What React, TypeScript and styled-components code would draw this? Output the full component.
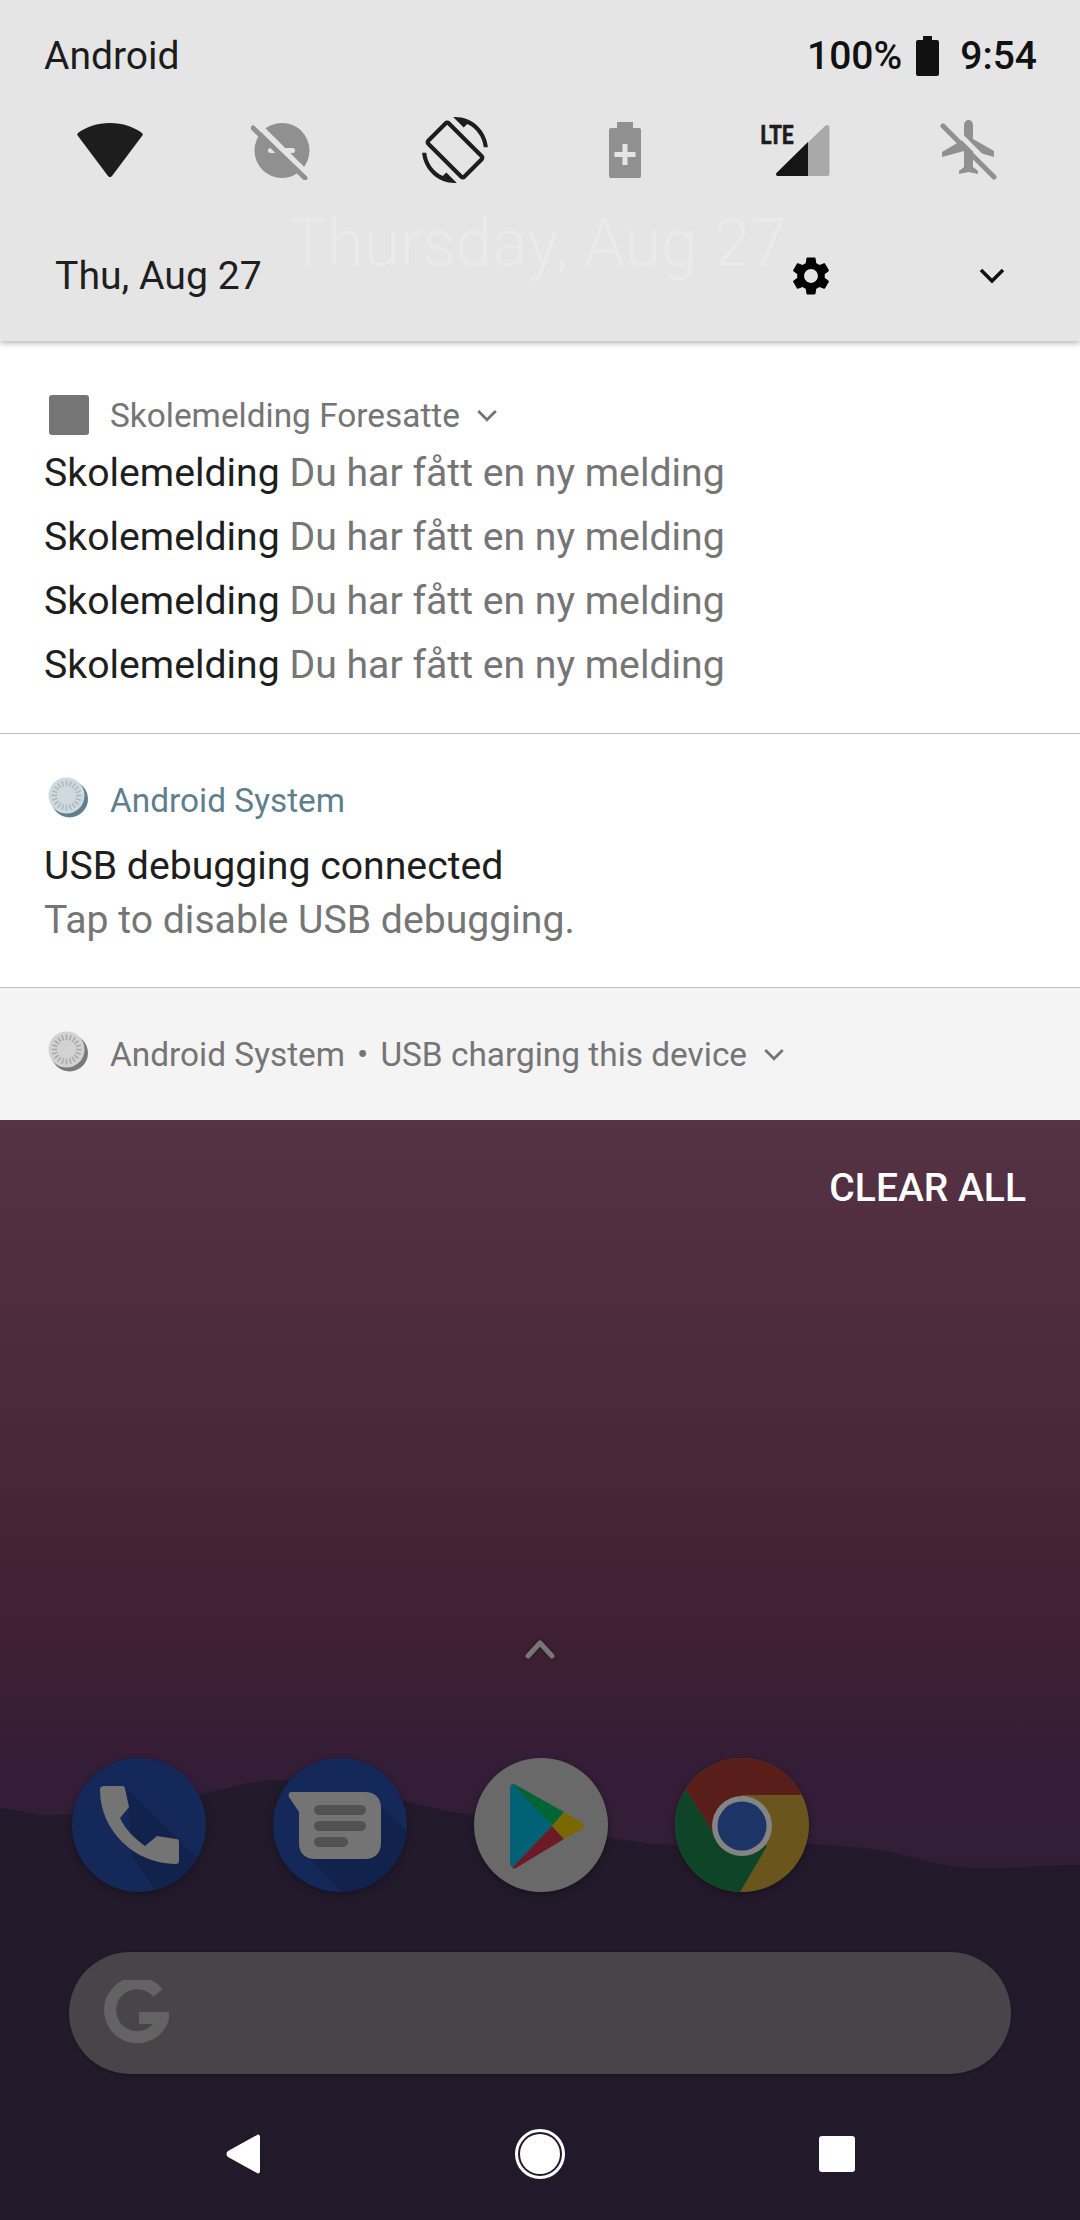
import React from "react";
import styled, { createGlobalStyle } from "styled-components";

const Global = createGlobalStyle`
  html, body { margin: 0; padding: 0; background: #211b28; }
  * { box-sizing: border-box; }
  #root { width: 1080px; height: 2220px; overflow: hidden; }
`;

const Screen = styled.div`
  width: 1080px;
  height: 2220px;
  display: flex;
  flex-direction: column;
  font-family: Roboto, "Noto Sans", sans-serif;
  -webkit-font-smoothing: antialiased;
`;

const Shade = styled.header`
  position: relative;
  z-index: 2;
  height: 341px;
  flex: none;
  background: #e6e5e6;
  box-shadow: 0 2px 6px rgba(0, 0, 0, 0.3);
  padding: 31px 44px 0;
  display: flex;
  flex-direction: column;
`;

const StatusBar = styled.div`
  height: 50px;
  display: flex;
  align-items: center;
  justify-content: space-between;
  font-size: 39px;
  color: #1c1c1c;
`;

const StatusRight = styled.div`
  display: flex;
  align-items: center;
  margin-right: -1px;
  color: #111;
  font-size: 39px;
  font-weight: 500;
`;

const StatusBattery = styled.svg`
  margin-left: 14px;
`;

const Clock = styled.span`
  margin-left: 21px;
`;

const Tiles = styled.div`
  margin-top: 34px;
  height: 70px;
  display: flex;
  align-items: center;
`;

const Tile = styled.div<{ $w: number }>`
  width: ${(p) => p.$w}px;
  flex: none;
  display: flex;
  justify-content: center;
`;

const LteLabel = styled.text`
  font-family: Roboto, sans-serif;
  font-size: 25px;
  font-weight: 700;
  fill: #1d1d1d;
  stroke: #1d1d1d;
  stroke-width: 0.7px;
`;

const DateRow = styled.div`
  position: relative;
  margin-top: 66px;
  height: 50px;
  padding-left: 11px;
  display: flex;
  align-items: center;
  font-size: 39.2px;
  color: #1f1f1f;
`;

const Ghost = styled.span`
  position: absolute;
  left: 244px;
  top: -47px;
  font-size: 66px;
  line-height: 80px;
  font-weight: 300;
  color: #ebeaeb;
  white-space: nowrap;
`;

const DateActions = styled.div`
  margin-left: auto;
  display: flex;
  align-items: center;
  gap: 138px;
  padding-right: 24px;
`;

const Card = styled.section<{ $h: number; $bg?: string; $pad: number; $line?: boolean }>`
  flex: none;
  height: ${(p) => p.$h}px;
  background: ${(p) => p.$bg ?? "#fff"};
  padding: ${(p) => p.$pad}px 44px 0;
  border-bottom: ${(p) => (p.$line ? "1px solid #bfbfbf" : "none")};
`;

const CardHead = styled.div`
  display: flex;
  align-items: center;
  height: 44px;
  font-size: 33.4px;
  color: #757575;
`;

const HeadIcon = styled.div`
  width: 40px;
  height: 40px;
  margin: 0 21px 0 5px;
  flex: none;
  display: flex;
`;

const SquareIcon = styled.div`
  width: 40px;
  height: 40px;
  border-radius: 3px;
  background: #757575;
`;

const Accent = styled.span`
  color: #5f7f8d;
`;

const Dot = styled.span`
  margin: 0 12px;
`;

const SmallChevron = styled.span`
  display: flex;
  margin-left: 13px;
`;

const Rows = styled.div`
  margin-top: 4px;
`;

const MsgRow = styled.div`
  height: 64px;
  display: flex;
  align-items: center;
  font-size: 39.2px;
  color: #757575;
  white-space: pre;
`;

const Strong = styled.span`
  color: #1e1e1e;
`;

const Title = styled.div`
  margin-top: 20px;
  height: 48px;
  line-height: 48px;
  font-size: 39.2px;
  color: #1e1e1e;
`;

const Sub = styled.div`
  margin-top: 6px;
  height: 48px;
  line-height: 48px;
  font-size: 39.2px;
  color: #757575;
`;

const Wallpaper = styled.main`
  position: relative;
  flex: 1;
  display: flex;
  flex-direction: column;
  background: linear-gradient(180deg, #553244 0%, #48283a 30%, #3d1f33 50%, #331d37 60%, #2f1c35 100%);
  padding: 46px 56px 0 69px;
`;

const Hills = styled.svg`
  position: absolute;
  left: 0;
  top: 620px;
  width: 1080px;
  height: 480px;
`;

const ClearAll = styled.div`
  position: relative;
  align-self: flex-end;
  margin-right: -2px;
  height: 44px;
  line-height: 44px;
  font-size: 39px;
  font-weight: 500;
  color: #fff;
`;

const SwipeUp = styled.div`
  position: relative;
  margin-top: 426px;
  margin-right: 13px;
  height: 30px;
  display: flex;
  justify-content: center;
  filter: drop-shadow(0 0 2px rgba(0, 0, 0, 0.4));
`;

const Dock = styled.div`
  position: relative;
  margin-top: 92px;
  margin-left: 3px;
  display: flex;
  gap: 67px;
`;

const DockIcon = styled.svg`
  width: 134px;
  height: 134px;
  flex: none;
  filter: drop-shadow(0 2px 3px rgba(0, 0, 0, 0.35));
`;

const SearchBar = styled.div`
  position: relative;
  margin-top: 60px;
  margin-right: 13px;
  height: 122px;
  border-radius: 61px;
  background: #47454a;
  padding-left: 35px;
  display: flex;
  align-items: center;
  box-shadow: 0 1px 3px rgba(0, 0, 0, 0.3);
`;

const NavBar = styled.nav`
  position: relative;
  margin-top: 55px;
  height: 50px;
  margin-left: -69px;
  margin-right: -56px;
  display: grid;
  grid-template-columns: 484px 112px 484px;
  align-items: center;
  justify-items: center;
`;

const NavBack = styled.div`
  justify-self: start;
  margin-left: 226px;
  display: flex;
`;

const NavHome = styled.div`
  width: 50px;
  height: 50px;
  border: 3px solid #fff;
  border-radius: 50%;
  padding: 2px;
  &::after {
    content: "";
    display: block;
    width: 100%;
    height: 100%;
    border-radius: 50%;
    background: #fff;
  }
`;

const NavSquare = styled.div`
  justify-self: start;
  margin-left: 223px;
  width: 36px;
  height: 36px;
  border-radius: 3px;
  background: #fff;
`;

const Chevron = ({ size, color, width = 2.4 }: { size: number; color: string; width?: number }) => (
  <svg width={size} height={size} viewBox="0 0 24 24" fill="none">
    <path d="M4.500 8.500 L12 16 L19.500 8.500" stroke={color} strokeWidth={width} />
  </svg>
);

const SysIcon = ({ fill, tick, shade }: { fill: string; tick: string; shade: string }) => {
  const ticks = Array.from({ length: 20 }, (_, i) => i * 18);
  return (
    <svg width="40" height="40" viewBox="0 0 40 40" overflow="visible">
      <circle cx="20.500" cy="19" r="18.500" fill={shade} />
      <circle cx="17.500" cy="15.500" r="18" fill={fill} />
      {ticks.map((a) => (
        <rect key={a} x="16.800" y="0.500" width="1.500" height="5.500" fill={tick} transform={`rotate(${a} 17.500 15.500)`} />
      ))}
    </svg>
  );
};

const App = () => (
  <Screen>
    <Global />
    <Shade>
      <StatusBar>
        <span>Android</span>
        <StatusRight>
          <span>100%</span>
          <StatusBattery width="23" height="40" viewBox="0 0 23 40">
            <path d="M7 0h9v4h5a2 2 0 0 1 2 2v32a2 2 0 0 1-2 2H2a2 2 0 0 1-2-2V6a2 2 0 0 1 2-2h5z" fill="#111" />
          </StatusBattery>
          <Clock>9:54</Clock>
        </StatusRight>
      </StatusBar>
      <Tiles>
        <Tile $w={132}>
          <svg width="68" height="56" viewBox="0 0 68 56">
            <path d="M34 1C21 1 10 5 2 11c-1 1-1 2 0 3l30 40c1 1.500 3 1.500 4 0l30-40c1-1 1-2 0-3C58 5 47 1 34 1z" fill="#1d1d1d" />
          </svg>
        </Tile>
        <Tile $w={210}>
          <svg width="60" height="60" viewBox="0 0 60 60">
            <circle cx="31" cy="30.500" r="27.500" fill="#909090" />
            <rect x="17" y="28" width="27" height="5" rx="2.500" fill="#e6e5e6" />
            <path d="M6 4 L58 56" stroke="#e6e5e6" strokeWidth="6" />
            <path d="M2 8 L54 58" stroke="#909090" strokeWidth="5" strokeLinecap="round" />
          </svg>
        </Tile>
        <Tile $w={138}>
          <svg width="66" height="66" viewBox="0 0 24 24" fill="#1d1d1d">
            <path d="M16.480 2.520c3.270 1.550 5.610 4.720 5.970 8.480h1.500C23.440 4.840 18.290 0 12 0l-.66.030 3.810 3.810 1.330-1.320zm-6.250-.770c-.590-.590-1.540-.590-2.120 0L1.750 8.110c-.590.590-.590 1.540 0 2.120l12.020 12.020c.590.590 1.540.590 2.120 0l6.360-6.360c.590-.590.590-1.540 0-2.120L10.230 1.750zm4.600 19.440L2.810 9.170l6.360-6.360 12.020 12.020-6.360 6.360zm-7.310.290C4.250 19.940 1.910 16.760 1.550 13H.050C.560 19.160 5.710 24 12 24l.66-.030-3.810-3.810-1.330 1.320z" />
          </svg>
        </Tile>
        <Tile $w={202}>
          <svg width="32" height="56" viewBox="0 0 32 56">
            <path d="M8 0h16v6h6a2 2 0 0 1 2 2v46a2 2 0 0 1-2 2H2a2 2 0 0 1-2-2V8a2 2 0 0 1 2-2h6z" fill="#909090" />
            <path d="M13.500 22h5v8h8v5h-8v8h-5v-8h-8v-5h8z" fill="#e6e5e6" />
          </svg>
        </Tile>
        <Tile $w={138}>
          <svg width="70" height="56" viewBox="0 0 70 56">
            <path d="M65 4c2-2 4.500-1 4.500 1.500V52a2 2 0 0 1-2 2H18c-2 0-2.500-2-1.500-3z" fill="#aaa9aa" />
            <path d="M48 20v34H18c-2 0-2.500-2-1.500-3z" fill="#151515" />
            <LteLabel x="0.500" y="22" textLength="33" lengthAdjust="spacingAndGlyphs">LTE</LteLabel>
          </svg>
        </Tile>
        <Tile $w={210}>
          <svg width="58" height="62" viewBox="0 0 58 62">
            <path d="M24 6C24 3 26 1 28.500 1S33 3 33 6V20L54 32V38L33 32V48L38 52V55L28.500 53L19 55V52L24 48V32L2 38V33L24 20z" fill="#909090" />
            <path d="M7 3 L58 54" stroke="#e6e5e6" strokeWidth="5" />
            <path d="M3 7 L54 58" stroke="#909090" strokeWidth="5" strokeLinecap="round" />
          </svg>
        </Tile>
      </Tiles>
      <DateRow>
        <Ghost>Thursday, Aug 27</Ghost>
        <span>Thu, Aug 27</span>
        <DateActions>
          <svg width="46" height="46" viewBox="0 0 24 24" fill="#000">
            <path d="M19.140 12.940c.040-.300.060-.610.060-.940 0-.320-.020-.640-.070-.940l2.030-1.580c.180-.140.230-.410.120-.610l-1.920-3.320c-.120-.220-.370-.290-.590-.220l-2.390.960c-.500-.380-1.030-.700-1.620-.940l-.360-2.540c-.040-.240-.240-.410-.480-.410h-3.840c-.240 0-.430.170-.470.410l-.360 2.540c-.590.240-1.130.570-1.620.940l-2.390-.960c-.220-.080-.470 0-.590.220L2.740 8.870c-.120.210-.080.470.120.610l2.030 1.580c-.050.300-.090.630-.090.940s.020.640.070.940l-2.030 1.580c-.180.140-.230.410-.120.610l1.920 3.320c.120.220.370.290.590.220l2.390-.960c.500.380 1.030.700 1.620.940l.360 2.540c.050.240.240.410.480.410h3.840c.240 0 .440-.170.470-.410l.360-2.540c.590-.240 1.130-.560 1.620-.940l2.390.960c.220.080.470 0 .590-.220l1.920-3.320c.120-.220.070-.470-.120-.610l-2.010-1.580zM12 15.600c-1.980 0-3.600-1.620-3.600-3.600s1.620-3.600 3.600-3.600 3.600 1.620 3.600 3.600-1.620 3.600-3.600 3.600z" />
          </svg>
          <svg width="40" height="40" viewBox="0 0 40 40" fill="none">
            <path d="M9 14 L20 25 L31 14" stroke="#111" strokeWidth="3.500" />
          </svg>
        </DateActions>
      </DateRow>
    </Shade>

    <Card $h={393} $pad={52} $line>
      <CardHead>
        <HeadIcon><SquareIcon /></HeadIcon>
        <span>Skolemelding Foresatte</span>
        <SmallChevron><Chevron size={28} color="#757575" /></SmallChevron>
      </CardHead>
      <Rows>
        {[0, 1, 2, 3].map((i) => (
          <MsgRow key={i}>
            <Strong>Skolemelding</Strong> Du har fått en ny melding
          </MsgRow>
        ))}
      </Rows>
    </Card>

    <Card $h={254} $pad={44} $line>
      <CardHead>
        <HeadIcon><SysIcon fill="#cfd9de" tick="#a9b8c0" shade="#5f7f8d" /></HeadIcon>
        <Accent>Android System</Accent>
      </CardHead>
      <Title>USB debugging connected</Title>
      <Sub>Tap to disable USB debugging.</Sub>
    </Card>

    <Card $h={132} $bg="#f4f4f4" $pad={44}>
      <CardHead>
        <HeadIcon><SysIcon fill="#d2d2d2" tick="#a8a8a8" shade="#7a7a7a" /></HeadIcon>
        <span>Android System</span>
        <Dot>•</Dot>
        <span>USB charging this device</span>
        <SmallChevron><Chevron size={28} color="#757575" /></SmallChevron>
      </CardHead>
    </Card>

    <Wallpaper>
      <Hills viewBox="0 0 1080 480" preserveAspectRatio="none">
        <path
          d="M0 68 C20 70 35 76 52 75 C85 74 110 72 140 65 C165 60 185 58 207 53 C235 46 255 40 282 40 C310 40 330 43 350 48 C375 54 395 58 413 63 C440 70 460 73 482 77 C525 85 565 90 606 97 C630 101 650 105 675 105 C725 106 775 102 826 105 C850 107 872 108 895 113 C925 120 950 128 978 128 C1015 128 1050 125 1080 125 V480 H0 Z"
          fill="#221a2b"
        />
      </Hills>
      <ClearAll>CLEAR ALL</ClearAll>
      <SwipeUp>
        <svg width="34" height="24" viewBox="0 0 34 24" fill="none">
          <path d="M5 20 L17 7 L29 20" stroke="#777" strokeWidth="5" strokeLinecap="round" strokeLinejoin="round" />
        </svg>
      </SwipeUp>
      <Dock>
        <DockIcon viewBox="0 0 134 134">
          <defs>
            <clipPath id="phoneClip"><circle cx="67" cy="67" r="67" /></clipPath>
          </defs>
          <g clipPath="url(#phoneClip)">
            <rect width="134" height="134" fill="#14295a" />
            <path d="M55 30 L134 109 V134 H85 L60 98z" fill="#11224d" />
          </g>
          <path d="M28 32a4 4 0 0 1 4-4H50a3 3 0 0 1 3 3L57 49L48 60C53 71 62 80 73 88L85 78L104 81a3 3 0 0 1 3 3V103a3 3 0 0 1-3 3C62 106 28 72 28 32z" fill="#747474" />
        </DockIcon>
        <DockIcon viewBox="0 0 134 134">
          <defs>
            <clipPath id="msgClip"><circle cx="67" cy="67" r="67" /></clipPath>
          </defs>
          <g clipPath="url(#msgClip)">
            <rect width="134" height="134" fill="#14295a" />
            <path d="M108 48 L134 74 V134 H68 L35 98z" fill="#11224d" />
          </g>
          <path d="M19 34H92C102 34 108 40 108 50V85C108 95 102 101 92 101H42C32 101 26 95 26 85V54L16 39C15 36 16 34 19 34z" fill="#747474" />
          <rect x="41" y="47" width="52" height="10" rx="5" fill="#525252" />
          <rect x="41" y="63" width="52" height="10" rx="5" fill="#525252" />
          <rect x="41" y="79" width="34" height="10" rx="5" fill="#525252" />
        </DockIcon>
        <DockIcon viewBox="0 0 134 134">
          <circle cx="67" cy="67" r="67" fill="#696969" />
          <path d="M36 30c0-4 3-5 5-3L78 68 41 108c-2 2-5 1-5-3z" fill="#016175" />
          <path d="M39 26.500c1-.500 2-.500 3 .500L90 54 78 68z" fill="#006536" />
          <path d="M38 110c2 .500 3 .500 4 0L90 81 78 68z" fill="#6c1b26" />
          <path d="M90 54 L108 65c2.500 1.500 2.500 4.500 0 6L90 81 L78 68z" fill="#7a6900" />
        </DockIcon>
        <DockIcon viewBox="0 0 134 134">
          <defs>
            <clipPath id="chromeClip"><circle cx="67" cy="67" r="67" /></clipPath>
          </defs>
          <g clipPath="url(#chromeClip)">
            <rect width="134" height="134" fill="#6a551d" />
            <path d="M67 37H134V0H0V32H11L39 76z" fill="#591d1a" />
            <path d="M11 32L39 76L92 88L65 134H0V32z" fill="#0e4528" />
          </g>
          <circle cx="67" cy="68" r="30" fill="#848484" />
          <circle cx="67" cy="68" r="24.500" fill="#1d3566" />
        </DockIcon>
      </Dock>
      <SearchBar>
        <svg width="65" height="66" viewBox="0 0 65 66" fill="none">
          <path d="M54 13 A27 27 0 1 0 59 38 H35" stroke="#636363" strokeWidth="12" />
        </svg>
      </SearchBar>
      <NavBar>
        <NavBack>
          <svg width="34" height="40" viewBox="0 0 34 40">
            <path d="M31 1c1.500-1 3 0 3 2v34c0 2-1.500 3-3 2L2 23c-2-1.500-2-4.500 0-6z" fill="#fff" />
          </svg>
        </NavBack>
        <NavHome />
        <NavSquare />
      </NavBar>
    </Wallpaper>
  </Screen>
);

export default App;
